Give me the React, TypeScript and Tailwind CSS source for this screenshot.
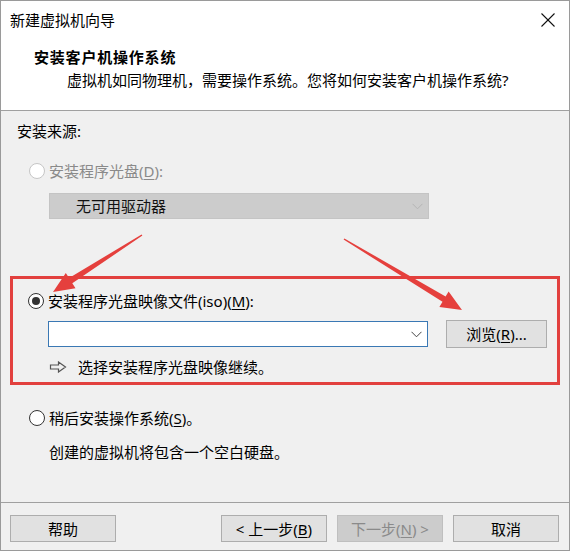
import React from "react";

const FONT = { fontFamily: '"Noto Sans", "Noto Sans CJK SC", sans-serif' };

function arrowPoints(tx: number, ty: number, hx: number, hy: number) {
  const dx = hx - tx;
  const dy = hy - ty;
  const len = Math.hypot(dx, dy);
  const ux = dx / len;
  const uy = dy / len;
  const nx = -uy;
  const ny = ux;
  const headLen = 21;
  const headW = 9;
  const shaftW = 3;
  const tailW = 0.7;
  const bx = hx - ux * headLen;
  const by = hy - uy * headLen;
  const pts: [number, number][] = [
    [tx + nx * tailW, ty + ny * tailW],
    [bx + nx * shaftW, by + ny * shaftW],
    [bx + nx * headW, by + ny * headW],
    [hx, hy],
    [bx - nx * headW, by - ny * headW],
    [bx - nx * shaftW, by - ny * shaftW],
    [tx - nx * tailW, ty - ny * tailW],
  ];
  return pts.map((p) => p.map((v) => v.toFixed(1)).join(",")).join(" ");
}

function Radio({ checked, disabled }: { checked?: boolean; disabled?: boolean }) {
  return (
    <div
      className={
        "w-[16px] h-[16px] rounded-full border flex items-center justify-center shrink-0 " +
        (disabled ? "border-[#c6c6c6] bg-white" : "border-[#333333] bg-white")
      }
    >
      {checked && <div className="w-[8px] h-[8px] rounded-full bg-[#333333]" />}
    </div>
  );
}

function Chevron({ color }: { color: string }) {
  return (
    <svg width="11" height="7" viewBox="0 0 11 7">
      <polyline points="0.5,0.8 5.5,5.8 10.5,0.8" fill="none" stroke={color} strokeWidth="1" />
    </svg>
  );
}

function U({ children }: { children: React.ReactNode }) {
  return <span className="underline underline-offset-2">{children}</span>;
}

function Btn({ children, disabled }: { children: React.ReactNode; disabled?: boolean }) {
  return (
    <div
      className={
        "w-[106px] h-[27px] border flex items-center justify-center text-[15px] leading-[20px] " +
        (disabled
          ? "bg-[#cccccc] border-[#bfbfbf] text-[#8a8a8a]"
          : "bg-[#e1e1e1] border-[#adadad] text-black")
      }
    >
      {children}
    </div>
  );
}

export default function App() {
  return (
    <div
      className="relative w-[570px] h-[551px] border border-[#9a9a9a] bg-[#f0f0f0] flex flex-col text-black overflow-hidden"
      style={FONT}
    >
      {/* Header */}
      <div className="bg-white h-[110px] border-b border-[#a0a0a0] flex flex-col shrink-0">
        <div className="flex items-center justify-between pt-[9px] pl-[9px] pr-[14px]">
          <span className="text-[15px] leading-[20px]">新建虚拟机向导</span>
          <svg width="14" height="14" viewBox="0 0 14 14">
            <line x1="0.5" y1="0.5" x2="13.5" y2="13.5" stroke="#111" strokeWidth="1.1" />
            <line x1="13.5" y1="0.5" x2="0.5" y2="13.5" stroke="#111" strokeWidth="1.1" />
          </svg>
        </div>
        <div className="mt-[17px] pl-[33px] text-[15px] leading-[20px] font-bold tracking-[0.8px]">
          安装客户机操作系统
        </div>
        <div className="mt-[3px] pl-[66px] text-[15px] leading-[20px]">
          虚拟机如同物理机，需要操作系统。您将如何安装客户机操作系统?
        </div>
      </div>

      {/* Body */}
      <div className="flex flex-col flex-1 text-[15px] leading-[20px]">
        <div className="mt-[10px] pl-[16px]">安装来源:</div>

        <div className="mt-[20px] pl-[28px] flex items-center gap-[4px] text-[#8a8a8a]">
          <Radio disabled />
          <span>
            安装程序光盘(<U>D</U>):
          </span>
        </div>

        <div className="mt-[12px] ml-[48px] w-[380px] h-[26px] bg-[#cccccc] border border-[#c4c4c4] flex items-center justify-between pl-[26px] pr-[5px]">
          <span className="text-[#111]">无可用驱动器</span>
          <Chevron color="#b4b4b4" />
        </div>

        {/* Red highlighted group */}
        <div className="mt-[57px] ml-[9px] w-[550px] h-[109px] border-[3px] border-[#e2403e] flex flex-col">
          <div className="mt-[12px] pl-[15px] flex items-center gap-[4px]">
            <Radio checked />
            <span>
              安装程序光盘映像文件(iso)(<U>M</U>):
            </span>
          </div>
          <div className="mt-[9px] ml-[35px] flex items-center gap-[18px]">
            <div className="w-[380px] h-[26px] bg-white border border-[#3a78b4] flex items-center justify-end pr-[5px]">
              <Chevron color="#444" />
            </div>
            <div className="w-[101px] h-[28px] bg-[#e1e1e1] border border-[#adadad] flex items-center justify-center">
              浏览(<U>R</U>)...
            </div>
          </div>
          <div className="mt-[9px] ml-[36px] flex items-center">
            <svg width="18" height="12" viewBox="0 0 18 12">
              <polygon
                points="1.5,4 9.5,4 9.5,1 16.5,6 9.5,11 9.5,8 1.5,8"
                fill="none"
                stroke="#555"
                strokeWidth="1.2"
                strokeLinejoin="miter"
              />
            </svg>
            <span className="ml-[11px]">选择安装程序光盘映像继续。</span>
          </div>
        </div>

        <div className="mt-[23px] pl-[28px] flex items-center gap-[4px]">
          <Radio />
          <span>
            稍后安装操作系统(<U>S</U>)。
          </span>
        </div>
        <div className="mt-[14px] pl-[48px]">创建的虚拟机将包含一个空白硬盘。</div>

        <div className="flex-1" />

        {/* Footer */}
        <div className="border-t border-[#a0a0a0] h-[48px] flex pt-[12px] pl-[9px] pr-[10px]">
          <Btn>帮助</Btn>
          <div className="flex-1" />
          <div className="flex gap-[10px]">
            <Btn>
              &lt; 上一步(<U>B</U>)
            </Btn>
            <Btn disabled>
              下一步(<U>N</U>) &gt;
            </Btn>
            <Btn>取消</Btn>
          </div>
        </div>
      </div>

      {/* Red annotation arrows */}
      <svg className="absolute left-0 top-0 pointer-events-none" width="570" height="551">
        <polygon points={arrowPoints(141, 234, 52, 291)} fill="#e5403d" />
        <polygon points={arrowPoints(343, 238, 461, 309)} fill="#e5403d" />
      </svg>
    </div>
  );
}
